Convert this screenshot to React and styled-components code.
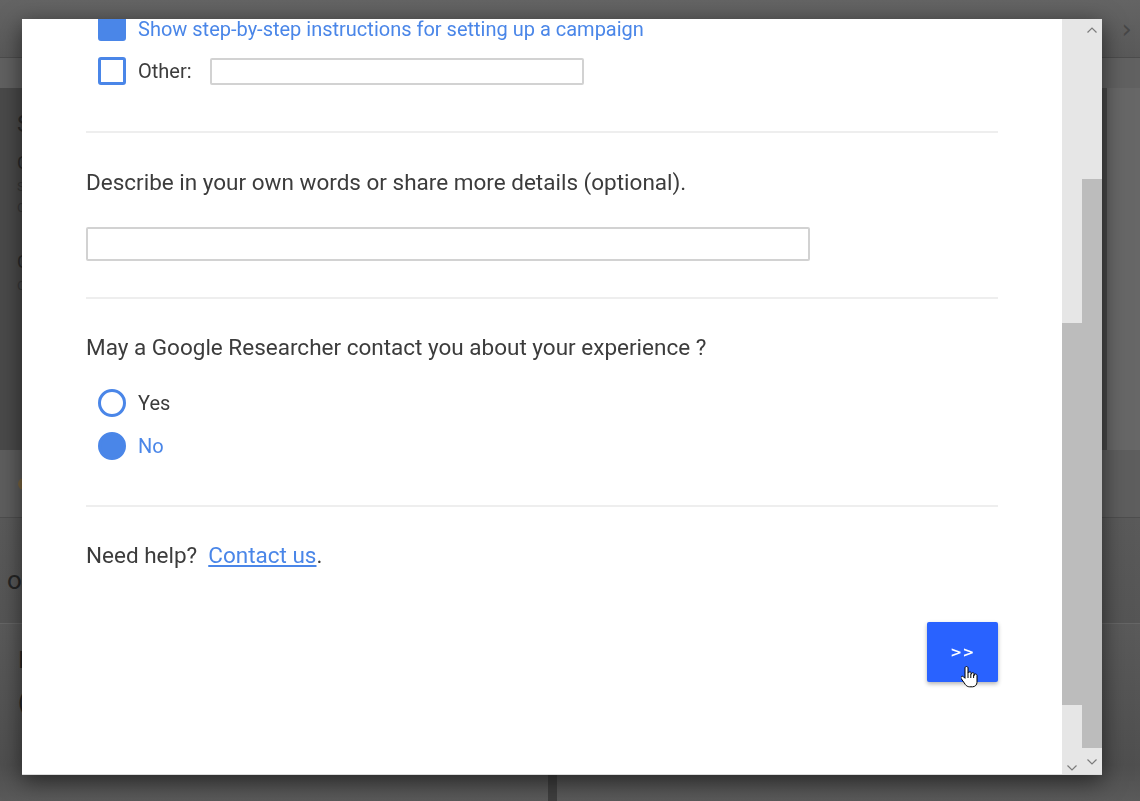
import React from "react";
import styled, { createGlobalStyle } from "styled-components";

const GlobalStyle = createGlobalStyle`
  html, body { margin: 0; padding: 0; }
  body {
    width: 1140px;
    height: 801px;
    overflow: hidden;
    background: #5a5a5a;
    font-family: Roboto, "Noto Sans", Arial, sans-serif;
  }
`;

/* ---------- dimmed page behind the dialog ---------- */
const Page = styled.div`
  width: 1140px;
  height: 801px;
  display: flex;
  flex-direction: column;
  background: #5c5c5c;
`;

const TopBar = styled.div`
  height: 58px;
  flex: none;
  display: flex;
  align-items: center;
  justify-content: flex-end;
  padding-right: 8px;
  background: linear-gradient(#646464, #595959);
  border-bottom: 1px solid #4c4c4c;
  box-sizing: border-box;
`;

const Chevron = styled.span`
  color: #474747;
  font-size: 26px;
  font-family: "DejaVu Sans", sans-serif;
`;

const SubBar = styled.div`
  height: 30px;
  flex: none;
  background: #616161;
`;

const SummaryRow = styled.div`
  height: 362px;
  flex: none;
  display: flex;
`;

const SummaryCard = styled.div`
  width: 1107px;
  background: #4a4a4a;
  padding: 22px 17px;
  box-sizing: border-box;
  color: #2a2a2a;
  display: flex;
  flex-direction: column;
  gap: 6px;
`;

const BgText = styled.div`
  font-size: ${(p) => p.$size || 14}px;
  color: ${(p) => p.$color || "#2b2b2b"};
  margin-top: ${(p) => p.$mt || 0}px;
`;

const SummaryRest = styled.div`
  flex: 1;
  background: #676767;
`;

const AlertStrip = styled.div`
  height: 67px;
  flex: none;
  background: #5e5e5e;
  border-bottom: 1px solid #4e4e4e;
  display: flex;
  align-items: center;
  padding-left: 18px;
`;

const Dot = styled.span`
  width: 12px;
  height: 12px;
  border-radius: 50%;
  background: #7a6540;
`;

const SectionHead = styled.div`
  height: 106px;
  flex: none;
  background: linear-gradient(#5a5a5a, #555555);
  border-bottom: 1px solid #666;
  display: flex;
  align-items: center;
  padding: 18px 0 0 7px;
  box-sizing: border-box;
  font-size: 26px;
  color: #252525;
`;

const CardGrid = styled.div`
  flex: 1;
  display: grid;
  grid-template-columns: 548px 1fr;
  column-gap: 9px;
  background: #3e3e3e;
`;

const BgCard = styled.div`
  background: linear-gradient(#5a5a5a, #4f4f4f 80%, #5a5a5a);
  padding: 22px 18px;
  color: #262626;
  display: flex;
  flex-direction: column;
  gap: 14px;
  font-size: 24px;
`;

/* ---------- dialog ---------- */
const Dialog = styled.div`
  position: fixed;
  left: 22px;
  top: 19px;
  width: 1080px;
  height: 756px;
  display: flex;
  background: #fff;
  border-bottom: 1px solid #dcdcdc;
  box-sizing: border-box;
  box-shadow: 0 6px 22px rgba(0, 0, 0, 0.55);
`;

const DialogBody = styled.div`
  flex: 1;
  overflow: hidden;
  position: relative;
`;

const Content = styled.div`
  margin-top: -14px;
  padding: 0 64px;
  color: #3c3c3c;
`;

const Section = styled.section`
  padding: ${(p) => p.$pt}px 0 ${(p) => p.$pb}px;
  border-bottom: ${(p) => (p.$last ? "none" : "2px solid #eeeeee")};
`;

const OptionList = styled.div`
  display: flex;
  flex-direction: column;
  padding-left: 12px;
  margin-top: ${(p) => p.$mt || 0}px;
`;

const OptionRow = styled.label`
  height: ${(p) => p.$h || 44}px;
  display: flex;
  align-items: center;
  gap: 12px;
  font-size: 20px;
  white-space: nowrap;
  color: ${(p) => (p.$active ? "#4a86e8" : "#3c3c3c")};
`;

const OptionText = styled.span`
  padding-top: ${(p) => p.$shift || 0}px;
`;

const CheckBox = styled.span`
  width: 28px;
  height: 28px;
  box-sizing: border-box;
  border-radius: 3px;
  border: 3px solid #4a86e8;
  background: ${(p) => (p.$checked ? "#4a86e8" : "#fff")};
  flex: none;
`;

const Radio = styled.span`
  width: 28px;
  height: 28px;
  box-sizing: border-box;
  border-radius: 50%;
  border: 3px solid #4a86e8;
  background: ${(p) => (p.$checked ? "#4a86e8" : "#fff")};
  flex: none;
`;

const TextField = styled.div`
  width: ${(p) => p.$w}px;
  height: ${(p) => p.$h}px;
  box-sizing: border-box;
  border: 2px solid #d2d2d2;
  border-radius: 2px;
  margin-left: ${(p) => p.$ml || 0}px;
  margin-top: ${(p) => p.$mt || 0}px;
  background: #fff;
  flex: none;
`;

const Question = styled.div`
  font-size: 22.5px;
  line-height: 26px;
  color: #3c3c3c;
  white-space: nowrap;
`;

const Link = styled.a`
  color: #4a86e8;
  text-decoration: underline;
  margin-left: 11px;
`;

const Actions = styled.div`
  display: flex;
  justify-content: flex-end;
  margin-top: 54px;
`;

const NextButton = styled.button`
  width: 71px;
  height: 60px;
  border: none;
  border-radius: 2px;
  background: #2962ff;
  color: #fff;
  font-family: "DejaVu Sans", sans-serif;
  font-weight: bold;
  font-size: 14px;
  letter-spacing: 0.5px;
  padding: 0;
  box-shadow: 0 2px 4px rgba(0, 0, 0, 0.3);
  position: relative;
`;

const Cursor = styled.svg`
  position: absolute;
  left: 34px;
  top: 43px;
`;

/* ---------- scrollbars ---------- */
const ScrollBar = styled.div`
  width: 20px;
  flex: none;
  background: #e6e6e6;
  display: flex;
  flex-direction: column;
  align-items: stretch;
`;

const ScrollGap = styled.div`
  height: ${(p) => p.$h}px;
  flex: none;
  display: flex;
  align-items: flex-start;
  justify-content: center;
  padding-top: 8px;
  box-sizing: border-box;
`;

const Thumb = styled.div`
  height: ${(p) => p.$h}px;
  flex: none;
  background: #bcbcbc;
`;

const ScrollFill = styled.div`
  flex: 1;
  display: flex;
  align-items: flex-end;
  justify-content: center;
  padding-bottom: ${(p) => p.$pb}px;
`;

const Arrow = ({ up }) => (
  <svg width="10" height="6" viewBox="0 0 10 6">
    <path
      d={up ? "M0.5 5.5 L5 1 L9.5 5.5" : "M0.5 0.5 L5 5 L9.5 0.5"}
      fill="none"
      stroke="#7c7c7c"
      strokeWidth="1.2"
    />
  </svg>
);

export default function App() {
  return (
    <>
      <GlobalStyle />
      <Page>
        <TopBar>
          <Chevron>›</Chevron>
        </TopBar>
        <SubBar />
        <SummaryRow>
          <SummaryCard>
            <BgText $size={24}>Summary</BgText>
            <BgText $size={18} $mt={8}>Campaigns</BgText>
            <BgText $size={13} $color="#383838">Status</BgText>
            <BgText $size={13} $color="#383838">Clicks</BgText>
            <BgText $size={18} $mt={30}>Conversions</BgText>
            <BgText $size={13} $color="#383838">Cost</BgText>
          </SummaryCard>
          <SummaryRest />
        </SummaryRow>
        <AlertStrip>
          <Dot />
        </AlertStrip>
        <SectionHead>overview</SectionHead>
        <CardGrid>
          <BgCard>
            <span>I</span>
            <span>(</span>
          </BgCard>
          <BgCard />
        </CardGrid>
      </Page>

      <Dialog>
        <DialogBody>
          <Content>
            <Section $pt={0} $pb={38}>
              <OptionList>
                <OptionRow $active>
                  <CheckBox $checked />
                  <OptionText $shift={4}>
                    Show step-by-step instructions for setting up a campaign
                  </OptionText>
                </OptionRow>
                <OptionRow>
                  <CheckBox />
                  <OptionText>Other:</OptionText>
                  <TextField $w={374} $h={27} $ml={6} />
                </OptionRow>
              </OptionList>
            </Section>

            <Section $pt={36} $pb={36}>
              <Question>Describe in your own words or share more details (optional).</Question>
              <TextField $w={724} $h={34} $mt={32} />
            </Section>

            <Section $pt={35} $pb={38}>
              <Question>May a Google Researcher contact you about your experience ?</Question>
              <OptionList $mt={21}>
                <OptionRow $h={43}>
                  <Radio />
                  <OptionText>Yes</OptionText>
                </OptionRow>
                <OptionRow $h={43} $active>
                  <Radio $checked />
                  <OptionText>No</OptionText>
                </OptionRow>
              </OptionList>
            </Section>

            <Section $pt={35} $pb={0} $last>
              <Question>
                Need help?<Link>Contact us</Link>.
              </Question>
              <Actions>
                <NextButton>
                  &gt;&gt;
                  <Cursor width="18" height="25" viewBox="0 0 18 25">
                    <path
                      d="M5.5 1.5c-.9 0-1.5.7-1.5 1.5v10.3l-1.6-1.6c-.6-.6-1.6-.6-2.1 0-.5.5-.5 1.3-.1 1.9l4.2 6c1 1.4 2.5 2.2 4.2 2.2h2.9c2.5 0 4.5-2 4.5-4.5v-6.8c0-.8-.6-1.5-1.4-1.5s-1.4.7-1.4 1.5v-1.3c0-.8-.6-1.5-1.4-1.5s-1.4.7-1.4 1.5v-.7c0-.8-.6-1.5-1.4-1.5S7 7.2 7 8V3c0-.8-.6-1.5-1.5-1.5z"
                      fill="#fff"
                      stroke="#000"
                      strokeWidth="1"
                    />
                    <path d="M7 8v5M9.8 8.5v4.5M12.6 9.5v3.5" stroke="#000" strokeWidth="1" fill="none" />
                  </Cursor>
                </NextButton>
              </Actions>
            </Section>
          </Content>
        </DialogBody>

        <ScrollBar>
          <ScrollGap $h={304} />
          <Thumb $h={382} />
          <ScrollFill $pb={3}>
            <Arrow />
          </ScrollFill>
        </ScrollBar>
        <ScrollBar>
          <ScrollGap $h={160}>
            <Arrow up />
          </ScrollGap>
          <Thumb $h={569} />
          <ScrollFill $pb={9}>
            <Arrow />
          </ScrollFill>
        </ScrollBar>
      </Dialog>
    </>
  );
}
